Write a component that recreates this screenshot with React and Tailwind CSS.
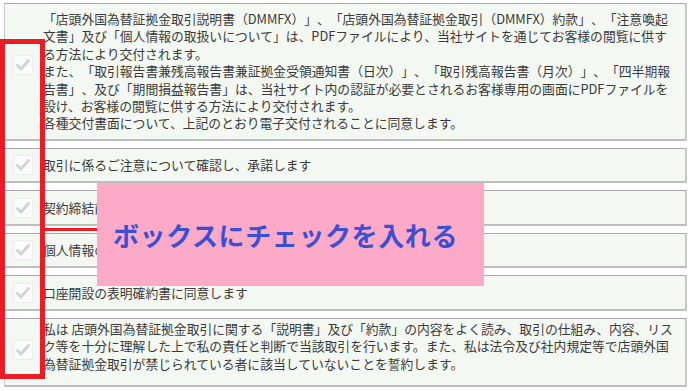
import React from "react";

function Check() {
  return (
    <div className="w-[20px] h-[20px] shrink-0 bg-[#fbfbfb] border border-[#ececec] flex items-center justify-center">
      <svg width="16" height="16" viewBox="0 0 16 16">
        <path d="M2.5 8.5 L6 12 L13.5 3.5" fill="none" stroke="#d3d3d3" strokeWidth="3" strokeLinecap="round" strokeLinejoin="round" />
      </svg>
    </div>
  );
}

const rowBase =
  "flex ml-[4px] w-[683px] bg-[#f4f8f2] border border-[#c6c6c6] border-t-[#a8a8a8] border-r-2 border-b-2 border-r-[#c8c8c8] border-b-[#bdbdbd]";

const textCls =
  "text-[12.8px] leading-[17.4px] text-[#3a3a3a] whitespace-nowrap [text-spacing-trim:space-all]";

function Lines({ lines }) {
  return (
    <div className={textCls}>
      {lines.map((l, i) => (
        <div key={i}>{l}</div>
      ))}
    </div>
  );
}

export default function App() {
  return (
    <div
      className="relative w-[690px] h-[391px] bg-white overflow-hidden"
      style={{ fontFamily: '"Noto Sans CJK JP", "Noto Sans", sans-serif' }}
    >
      <div className="flex flex-col gap-[7px] pt-[3px]">
        <div className={rowBase + " h-[138px] items-start"}>
          <div className="ml-[8px] mr-[10px] mt-[51px]">
            <Check />
          </div>
          <div className="mt-[6px]">
            <Lines
              lines={[
                "「店頭外国為替証拠金取引説明書（DMMFX）」、「店頭外国為替証拠金取引（DMMFX）約款」、「注意喚起",
                "文書」及び「個人情報の取扱いについて」は、PDFファイルにより、当社サイトを通じてお客様の閲覧に供す",
                "る方法により交付されます。",
                "また、「取引報告書兼残高報告書兼証拠金受領通知書（日次）」、「取引残高報告書（月次）」、「四半期報",
                "告書」、及び「期間損益報告書」は、当社サイト内の認証が必要とされるお客様専用の画面にPDFファイルを",
                "設け、お客様の閲覧に供する方法により交付されます。",
                "各種交付書面について、上記のとおり電子交付されることに同意します。",
              ]}
            />
          </div>
        </div>

        <div className={rowBase + " h-[35px] items-center"}>
          <div className="ml-[8px] mr-[10px]">
            <Check />
          </div>
          <div className={textCls}>取引に係るご注意について確認し、承諾します</div>
        </div>

        <div className={rowBase + " h-[36px] items-center"}>
          <div className="ml-[8px] mr-[10px]">
            <Check />
          </div>
          <div className={textCls}>契約締結前交付書面について確認し、承諾します</div>
        </div>

        <div className={rowBase + " h-[35px] items-center"}>
          <div className="ml-[8px] mr-[10px]">
            <Check />
          </div>
          <div className={textCls}>個人情報の取扱いについて同意します</div>
        </div>

        <div className={rowBase + " h-[36px] items-center"}>
          <div className="ml-[8px] mr-[10px]">
            <Check />
          </div>
          <div className={textCls}>口座開設の表明確約書に同意します</div>
        </div>

        <div className={rowBase + " h-[69px] items-start"}>
          <div className="ml-[8px] mr-[10px] mt-[21px]">
            <Check />
          </div>
          <div className="mt-[1px]">
            <Lines
              lines={[
                "私は 店頭外国為替証拠金取引に関する「説明書」及び「約款」の内容をよく読み、取引の仕組み、内容、リス",
                "ク等を十分に理解した上で私の責任と判断で当該取引を行います。また、私は法令及び社内規定等で店頭外国",
                "為替証拠金取引が禁じられている者に該当していないことを誓約します。",
              ]}
            />
          </div>
        </div>
      </div>

      {/* annotation overlays */}
      <div className="absolute left-0 top-[39px] w-[45px] h-[340px] border-[5px] border-[#ec1c24]" />
      <div className="absolute left-[45px] top-[228px] w-[52px] h-[3px] bg-[#ec1c24]" />
      <div className="absolute left-[97px] top-[183px] w-[387px] h-[103px] bg-[#fdaac8] flex items-center pl-[16px]">
        <span className="text-[26px] font-bold text-[#3b4fd3] tracking-[0.6px] whitespace-nowrap leading-none">
          ボックスにチェックを入れる
        </span>
      </div>
    </div>
  );
}
